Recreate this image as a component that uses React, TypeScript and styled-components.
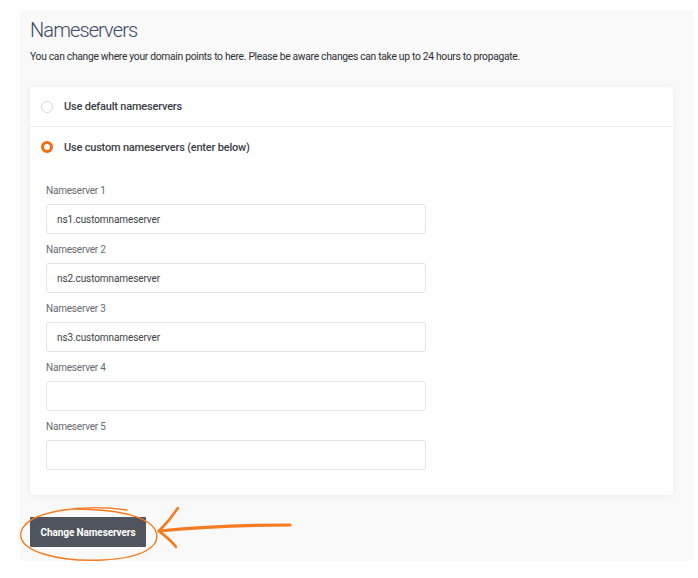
import * as React from 'react';
import styled, {createGlobalStyle} from 'styled-components';

const GlobalStyle = createGlobalStyle`
    *{
        box-sizing: border-box;
        font-family: Roboto, 'Liberation Sans', sans-serif;
    }
    body{
        margin: 0;
        padding: 0;
        background-color: #ffffff;
    }
`;

const Page = styled.div`
    padding: 10px 5px 17px 20px;
`;

const Panel = styled.section`
    background-color: #f9f9f9;
    padding: 8px 20px 14px 10px;
`;

const Title = styled.h2`
    margin: 0;
    font-size: 20px;
    line-height: 24px;
    font-weight: 300;
    letter-spacing: -0.9px;
    color: #3b4a66;
`;

const Intro = styled.p`
    margin: 8px 0 0;
    font-size: 10.3px;
    line-height: 14px;
    letter-spacing: -0.3px;
    color: #2b2f36;
`;

const Card = styled.div`
    margin-top: 23px;
    background-color: #ffffff;
    border-radius: 4px;
    box-shadow: 0 1px 6px rgba(0, 0, 0, 0.06);
`;

const Option = styled.label<{$divider?: boolean}>`
    display: flex;
    align-items: center;
    gap: 11px;
    height: 40px;
    padding: 0 11px;
    font-size: 11px;
    font-weight: 500;
    letter-spacing: -0.2px;
    color: #3a3f47;
    border-bottom: ${p => (p.$divider ? '1px solid #ececec' : 'none')};
`;

const Radio = styled.span<{$checked?: boolean}>`
    width: 12px;
    height: 12px;
    border-radius: 50%;
    flex-shrink: 0;
    background: #ffffff;
    border: ${p => (p.$checked ? '3.5px solid #f26a13' : '1px solid #d6d6d6')};
`;

const Fields = styled.div`
    padding: 17px 16px 16px;
`;

const Field = styled.div`
    margin-bottom: 9px;
`;

const FieldLabel = styled.div`
    font-size: 10px;
    line-height: 14px;
    letter-spacing: -0.2px;
    color: #666a70;
    margin-bottom: 6px;
`;

const Input = styled.input`
    display: block;
    width: 380px;
    height: 30px;
    padding: 0 10px;
    border: 1px solid #e4e4e4;
    border-radius: 3px;
    background: #ffffff;
    font-size: 10px;
    letter-spacing: -0.1px;
    color: #3a3f47;
    outline: none;
`;

const Actions = styled.div`
    position: relative;
    margin-top: 22px;
`;

const Button = styled.button`
    display: block;
    width: 116px;
    height: 30px;
    padding: 0;
    border: none;
    border-radius: 1px;
    background-color: #50555d;
    color: #ffffff;
    font-size: 10px;
    font-weight: 700;
    letter-spacing: -0.1px;
    white-space: nowrap;
    cursor: pointer;
`;

const Scribble = styled.svg`
    position: absolute;
    left: -15px;
    top: -15px;
    width: 285px;
    height: 62px;
    pointer-events: none;
    overflow: visible;
`;

const servers = [
    'ns1.customnameserver',
    'ns2.customnameserver',
    'ns3.customnameserver',
    '',
    '',
];

export default function App() {
    return (
        <>
            <GlobalStyle/>
            <Page>
                <Panel>
                    <Title>Nameservers</Title>
                    <Intro>You can change where your domain points to here. Please be aware changes can take up to 24 hours to propagate.</Intro>
                    <Card>
                        <Option $divider>
                            <Radio/>
                            Use default nameservers
                        </Option>
                        <Option>
                            <Radio $checked/>
                            Use custom nameservers (enter below)
                        </Option>
                        <Fields>
                            {servers.map((value, i) => (
                                <Field key={i}>
                                    <FieldLabel>Nameserver {i + 1}</FieldLabel>
                                    <Input defaultValue={value}/>
                                </Field>
                            ))}
                        </Fields>
                    </Card>
                    <Actions>
                        <Button>Change Nameservers</Button>
                        <Scribble viewBox="0 0 285 62">
                            <path
                                d="M 112 8 C 70 2, 12 8, 6 30 C 2 50, 45 60, 88 58 C 128 56, 146 44, 141 30 C 137 17, 110 7, 58 7"
                                fill="none" stroke="#f47b20" strokeWidth="1.4" strokeLinecap="round"/>
                            <path
                                d="M 144 29 C 185 25, 230 23, 275 23"
                                fill="none" stroke="#f47b20" strokeWidth="3.2" strokeLinecap="round"/>
                            <path
                                d="M 163 6 C 157 15, 150 23, 144 29 C 150 34, 157 39, 161 45"
                                fill="none" stroke="#f47b20" strokeWidth="2.6" strokeLinecap="round" strokeLinejoin="round"/>
                        </Scribble>
                    </Actions>
                </Panel>
            </Page>
        </>
    );
}
